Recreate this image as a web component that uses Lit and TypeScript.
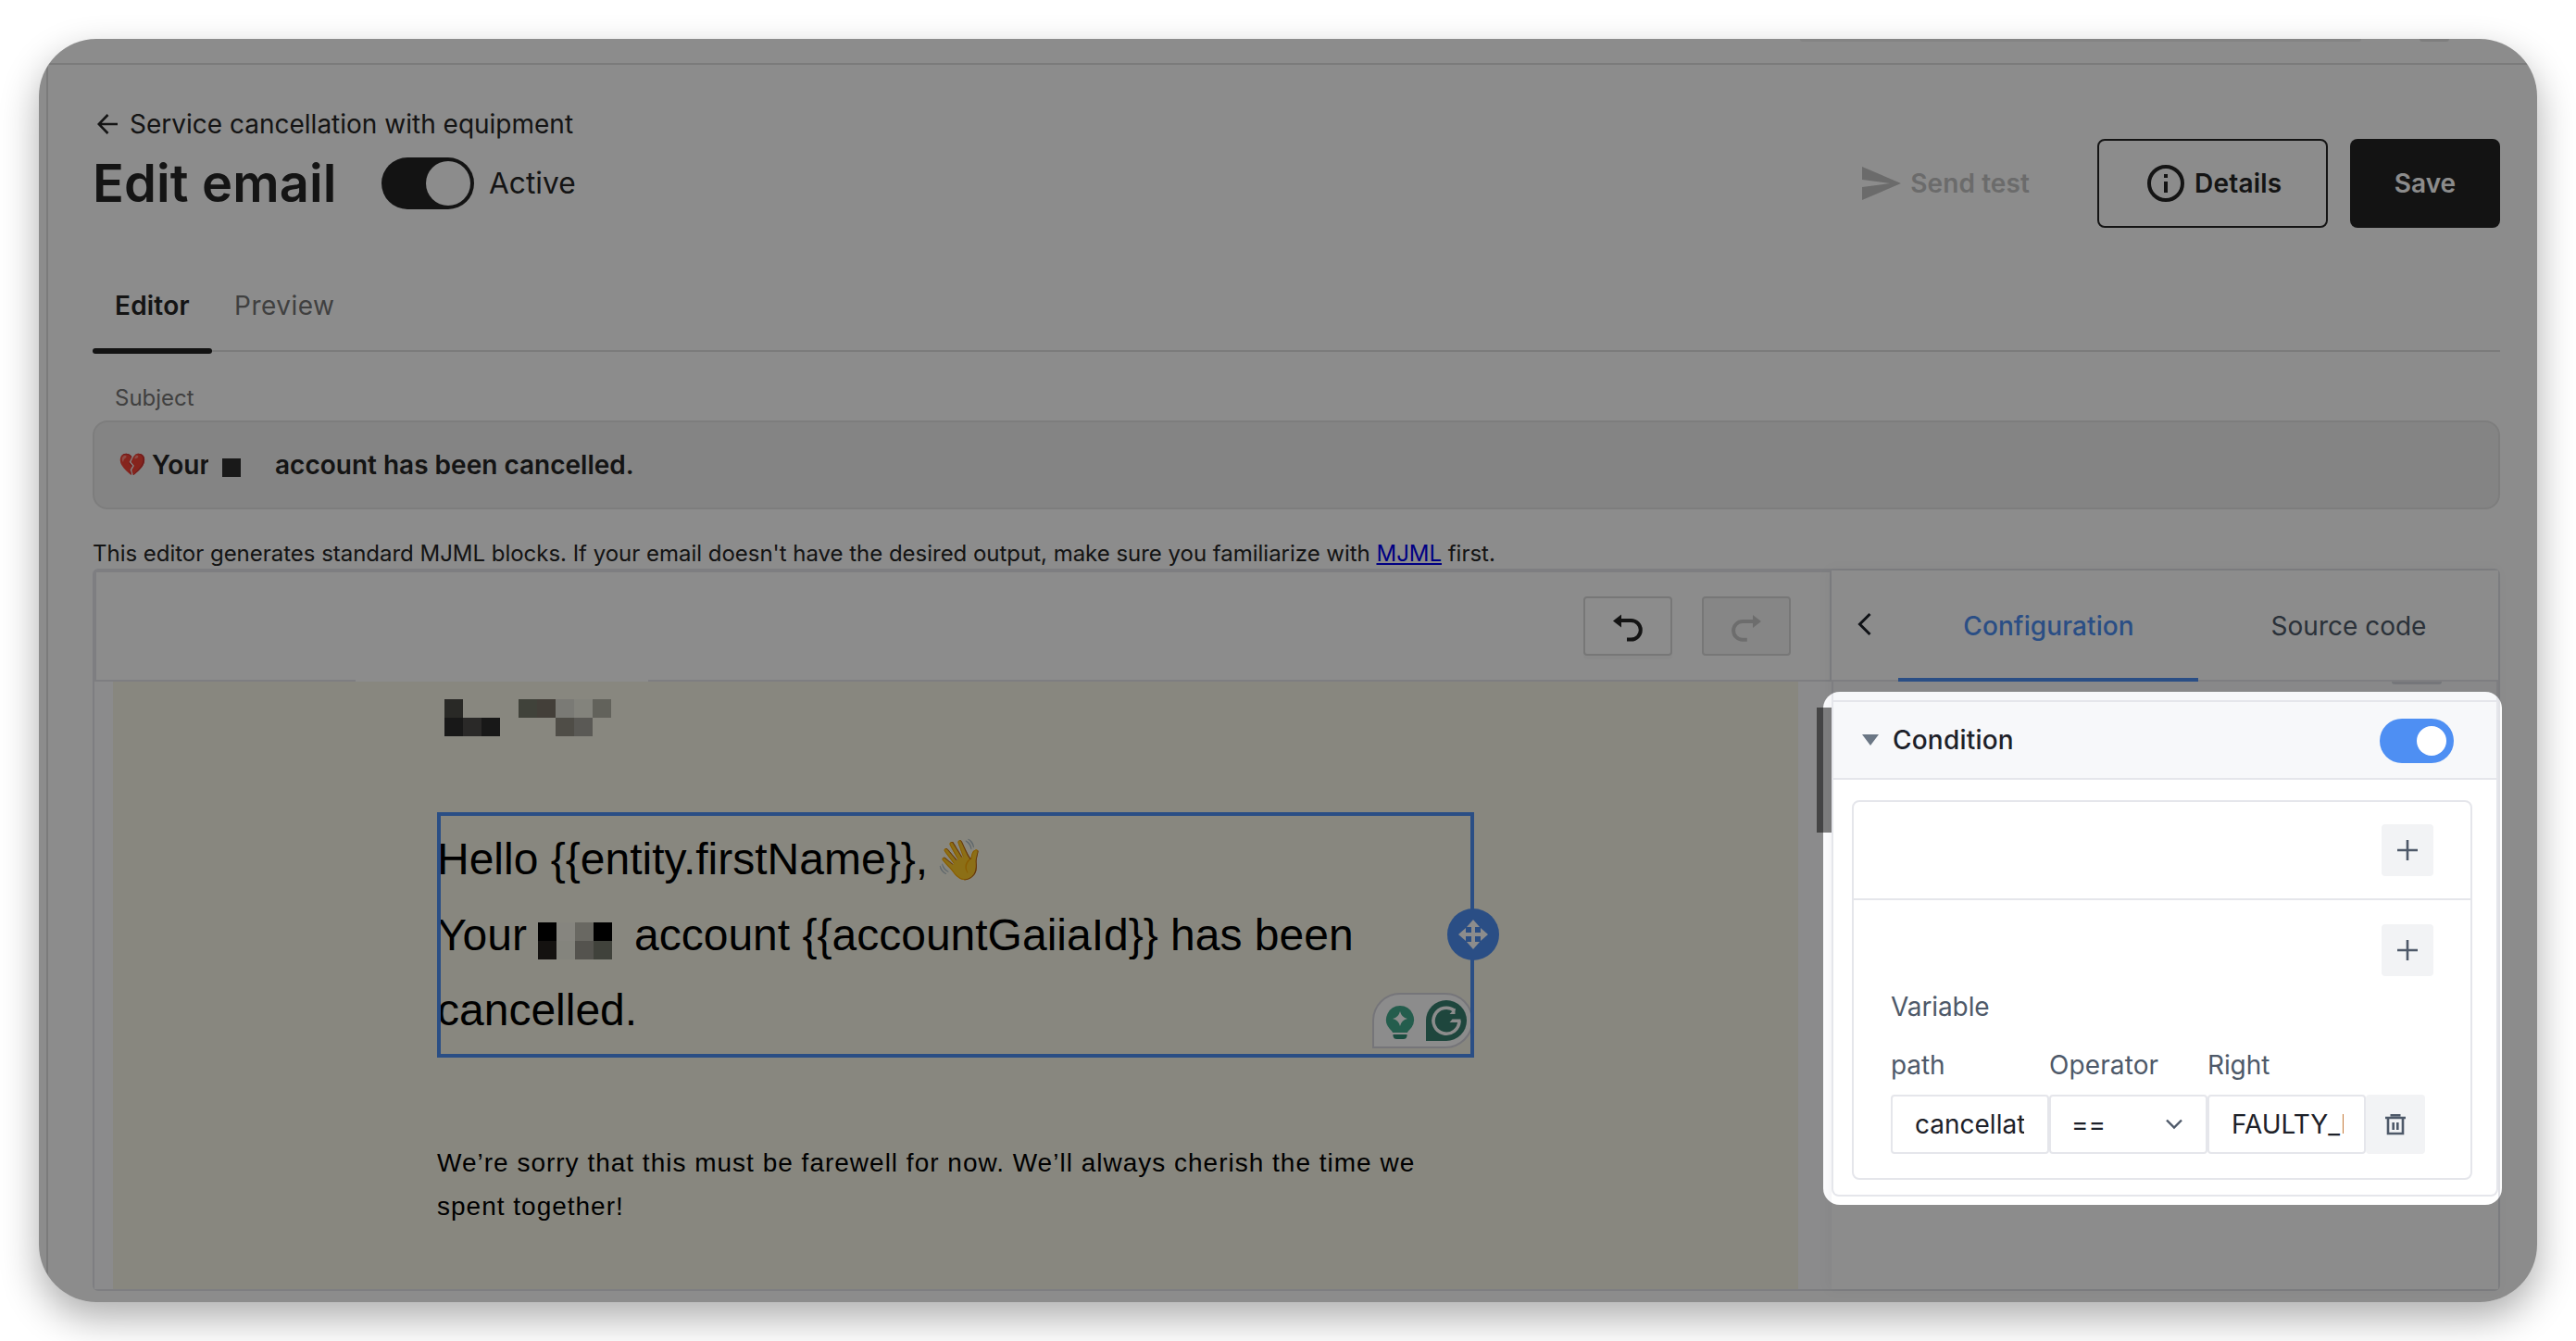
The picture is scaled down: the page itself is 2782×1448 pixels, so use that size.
import { LitElement, html, css, svg } from "lit";
import { customElement, state } from "lit/decorators.js";
import { styleMap } from "lit/directives/style-map.js";

const NONE = "transparent";

/* Pixelated redactions, one colour per 20px cell, row by row. */
const LOGO_CELLS = [
  ["#4b4b46", NONE, NONE, NONE, "#76796b", "#7a7468", "#deded5", "#efeee2", "#b2b2a7"],
  ["#2d2d2c", "#4d4c4a", "#2d2d2c", NONE, NONE, NONE, "#908d82", "#a4a39b", NONE],
];
const NAME_CELLS = [
  ["#000000", "#f4f3e8", "#bfbeb2", "#000000"],
  ["#25211e", "#f1f0e4", "#99988f", "#76796c"],
];

@customElement("pixel-mosaic")
class PixelMosaic extends LitElement {
  static properties = { cells: { attribute: false } };
  declare cells: string[][];

  static styles = css`
    :host {
      display: inline-flex;
      flex-direction: column;
    }
    .row {
      display: flex;
    }
    .cell {
      width: 20px;
      height: 20px;
    }
  `;

  render() {
    return (this.cells ?? []).map(
      (row) => html`<div class="row">
        ${row.map((c) => html`<div class="cell" style=${styleMap({ background: c })}></div>`)}
      </div>`,
    );
  }
}

@customElement("condition-panel")
class ConditionPanel extends LitElement {
  @state() private enabled = true;

  static styles = css`
    :host {
      display: block;
      color: #4e5969;
      font: 400 28px/1 Inter, sans-serif;
    }
    .card {
      border: solid #e5e6eb;
      border-width: 0 2px 2px;
      border-radius: 0 0 8px 8px;
      box-sizing: border-box;
      height: 556px;
      background: #fff;
      display: flex;
      flex-direction: column;
    }
    .prev {
      height: 20px;
      background: #f7f8fa;
      border-bottom: 2px solid #e5e6eb;
      display: flex;
      justify-content: flex-end;
      padding-right: 59px;
    }
    .prev-switch {
      width: 54px;
      height: 3px;
      border-radius: 0 0 24px 24px;
      background: #d5d8de;
    }
    .head {
      height: 82px;
      background: #f7f8fa;
      border-bottom: 2px solid #e5e6eb;
      display: flex;
      align-items: center;
      padding: 0 46px 0 31px;
    }
    .head svg {
      width: 18px;
      height: 12px;
      flex: none;
    }
    .title {
      margin-left: 15px;
      flex: 1;
      font-weight: 500;
      letter-spacing: 0.2px;
      color: #1d2129;
      line-height: 82px;
    }
    .switch {
      width: 80px;
      height: 48px;
      border: 0;
      padding: 8px;
      box-sizing: border-box;
      border-radius: 24px;
      background: #4e8ff3;
      display: flex;
      justify-content: flex-end;
      margin-top: 2px;
    }
    .knob {
      width: 32px;
      height: 32px;
      border-radius: 50%;
      background: #fff;
    }
    .group {
      margin: 22px 26px 0 20px;
      height: 410px;
      box-sizing: border-box;
      border: 2px solid #e5e6eb;
      border-radius: 8px;
    }
    .top {
      height: 104px;
      border-bottom: 2px solid #e5e6eb;
      display: flex;
      align-items: center;
      justify-content: flex-end;
      padding-right: 40px;
    }
    .rules {
      padding: 26px 40px 0;
      display: flex;
      flex-direction: column;
    }
    .add {
      width: 56px;
      height: 56px;
      border-radius: 4px;
      background: #f2f3f5;
      display: grid;
      place-items: center;
    }
    .rules .add {
      align-self: flex-end;
    }
    .add svg,
    .remove svg {
      width: 24px;
      height: 24px;
    }
    .labels {
      display: grid;
      grid-template-columns: 171px 171px 170px;
      grid-template-rows: 62px 64px;
      margin-top: 2px;
      line-height: 62px;
      letter-spacing: -0.1px;
    }
    .labels span:first-child {
      grid-column: 1 / -1;
    }
    .labels span:nth-child(n + 2) {
      line-height: 64px;
    }
    .labels span:nth-child(3) {
      letter-spacing: 0.1px;
    }
    .fields {
      display: flex;
      height: 64px;
    }
    .field {
      width: 171px;
      box-sizing: border-box;
      border: 2px solid #e5e6eb;
      border-radius: 4px;
      padding: 0 24px;
      line-height: 60px;
      color: #1d2129;
      display: flex;
      align-items: center;
      justify-content: space-between;
    }
    .field.path {
      padding-right: 25px;
    }
    .field.operator {
      padding-left: 22px;
      padding-right: 25px;
    }
    .field.right {
      padding-right: 22px;
    }
    .value {
      overflow: hidden;
      white-space: nowrap;
    }
    .field svg {
      width: 18px;
      height: 12px;
    }
    .remove {
      width: 64px;
      border-radius: 4px;
      background: #f2f3f5;
      display: grid;
      place-items: center;
    }
  `;

  private plus() {
    return html`<div class="add" role="button" aria-label="Add">
      <svg viewBox="0 0 24 24" fill="none" stroke="#4e5969" stroke-width="2.6">
        <path d="M12 1v22M1 12h22" />
      </svg>
    </div>`;
  }

  render() {
    return html`
      <div class="card">
        <div class="prev"><div class="prev-switch"></div></div>
        <div class="head">
          <svg viewBox="0 0 18 12"><path d="M0 0h18L9 12z" fill="#6b7785" /></svg>
          <span class="title">Condition</span>
          <div class="switch" role="switch" aria-checked=${String(this.enabled)}>
            <div class="knob"></div>
          </div>
        </div>
        <div class="group">
          <div class="top">${this.plus()}</div>
          <div class="rules">
            ${this.plus()}
            <div class="labels">
              <span>Variable</span><span>path</span><span>Operator</span><span>Right</span>
            </div>
            <div class="fields">
              <div class="field path"><span class="value">cancellat</span></div>
              <div class="field operator">
                <span class="value">==</span>
                <svg viewBox="0 0 18 12" fill="none" stroke="#4e5969" stroke-width="2.4">
                  <path d="M1 1.5l8 8 8-8" />
                </svg>
              </div>
              <div class="field right"><span class="value">FAULTY_I</span></div>
              <div class="remove" role="button" aria-label="Remove">
                <svg viewBox="0 0 24 24" fill="none" stroke="#4e5969" stroke-width="2.6">
                  <path d="M1 5h22M6.500 2.300h11M4 5v17h16V5M9.700 10v8M14.300 10v8" />
                </svg>
              </div>
            </div>
          </div>
        </div>
      </div>
    `;
  }
}

@customElement("app-root")
class AppRoot extends LitElement {
  static styles = css`
    :host {
      display: block;
      box-sizing: border-box;
      width: 2782px;
      height: 1448px;
      padding: 42px;
      overflow: hidden;
      background: #fff;
      color: #252525;
      font: 400 28px/1 Inter, sans-serif;
    }
    * {
      box-sizing: border-box;
    }
    .window {
      position: relative;
      height: 1364px;
      border-radius: 62px;
      overflow: hidden;
      background: #fff;
      box-shadow: 0 17px 42px rgba(0, 0, 0, 0.32);
    }
    .topbar {
      height: 28px;
      border-bottom: 2px solid #e1e1e1;
      display: flex;
      justify-content: flex-end;
      padding-right: 95px;
      gap: 63px;
    }
    .search-edge {
      width: 606px;
      height: 3px;
      border-radius: 0 0 6px 6px;
      background: #f0f0f0;
    }
    .avatar-edge {
      width: 32px;
      height: 3px;
      border-radius: 0 0 16px 16px;
      background: #e6e6e6;
    }
    .page {
      margin-left: 8px;
      height: 1336px;
      border-left: 2px solid #e1e1e1;
      padding: 44px 40px 0 48px;
    }
    .header {
      display: flex;
      justify-content: space-between;
      height: 132px;
    }
    .back {
      display: flex;
      align-items: center;
      height: 40px;
      padding-left: 5px;
    }
    .back svg {
      width: 23px;
      height: 24px;
      margin-right: 12px;
    }
    .title-row {
      display: flex;
      align-items: center;
      height: 88px;
    }
    h1 {
      margin: 0;
      font-size: 56px;
      font-weight: 600;
      line-height: 88px;
      letter-spacing: 0.12px;
      width: 312px;
      white-space: nowrap;
    }
    .switch {
      width: 100px;
      height: 56px;
      border-radius: 28px;
      background: #242424;
      padding: 4px;
      display: flex;
      justify-content: flex-end;
    }
    .knob {
      width: 48px;
      height: 48px;
      border-radius: 50%;
      background: #fff;
    }
    .active {
      margin-left: 16px;
      font-size: 31.7px;
    }
    .actions {
      display: flex;
      align-items: center;
      height: 96px;
      margin-top: 36px;
      font-weight: 600;
    }
    .send {
      display: flex;
      align-items: center;
      color: #c4c4c4;
      margin-right: 73px;
      letter-spacing: 0.1px;
    }
    .send svg {
      width: 42px;
      height: 36px;
      margin-right: 10px;
    }
    .details {
      width: 249px;
      height: 96px;
      border: 2px solid #252525;
      border-radius: 8px;
      display: flex;
      align-items: center;
      padding-left: 52px;
      letter-spacing: 0.2px;
    }
    .details svg {
      width: 40px;
      height: 40px;
      margin-right: 11px;
    }
    .save {
      width: 162px;
      height: 96px;
      margin-left: 24px;
      border-radius: 8px;
      background: #242424;
      color: #fff;
      display: grid;
      place-items: center;
    }
    .tabs {
      height: 134px;
      border-bottom: 2px solid #e1e1e1;
      display: flex;
      align-items: flex-end;
    }
    .tab {
      display: flex;
      flex-direction: column;
      margin-bottom: -4px;
      line-height: 92px;
    }
    .tab span {
      padding: 0 24px 0 24px;
    }
    .tab.on {
      width: 129px;
      font-weight: 600;
      letter-spacing: 0.2px;
    }
    .tab.off {
      color: #757575;
      letter-spacing: 0.5px;
    }
    .bar {
      height: 6px;
      border-radius: 3px;
    }
    .tab.on .bar {
      background: #242424;
    }
    .label {
      margin-top: 26px;
      padding-left: 24px;
      height: 48px;
      line-height: 48px;
      font-size: 24px;
      color: #757575;
    }
    .subject {
      height: 96px;
      border: 2px solid #e4e4e4;
      border-radius: 16px;
      background: #f0f0f0;
      display: flex;
      align-items: center;
      padding-left: 26px;
      font-weight: 600;
      white-space: pre;
    }
    .subject .heart {
      font-size: 24px;
      width: 36px;
      font-weight: 400;
      white-space: nowrap;
    }
    .subject .your {
      width: 61px;
      overflow: hidden;
      line-height: 40px;
    }
    .redacted {
      width: 20px;
      height: 20px;
      margin: 6px 37px 0 15px;
      background: #2e2e2e;
    }
    .note {
      margin-top: 31px;
      height: 33px;
      line-height: 33px;
      font-size: 24px;
      letter-spacing: -0.022px;
      white-space: nowrap;
    }
    .note a {
      color: #0000ee;
    }
    .editor {
      height: 780px;
      border: 2px solid #e5e6eb;
      border-radius: 6px;
      display: flex;
      background: #fff;
    }
    .left {
      width: 1876px;
      display: flex;
      flex-direction: column;
    }
    .toolbar {
      height: 120px;
      border: 2px solid #e5e6eb;
      display: flex;
      align-items: flex-start;
      justify-content: flex-end;
      padding: 26px 42px 0 0;
      gap: 32px;
    }
    .tool {
      width: 96px;
      height: 64px;
      border: 2px solid #d9d9d9;
      border-radius: 4px;
      box-shadow: 0 4px 0 rgba(0, 0, 0, 0.02);
    }
    .tool.off {
      background: #f5f5f5;
      box-shadow: none;
    }
    .tool svg {
      display: block;
      width: 92px;
      height: 60px;
    }
    .stage {
      position: relative;
      height: 656px;
      padding: 0 36px 0 20px;
      background: #fdfdff;
    }
    .cut {
      position: absolute;
      left: 282px;
      top: -2px;
      width: 316px;
      height: 2px;
      background: #fff;
    }
    .thumb {
      position: absolute;
      right: 0;
      top: 28px;
      width: 16px;
      height: 135px;
      background: rgba(0, 0, 0, 0.5);
    }
    .canvas {
      height: 656px;
      background: #f7f6e8;
      padding: 19px 350px 0;
      color: #000;
      font-family: "Liberation Sans", Arial, sans-serif;
    }
    .logo {
      display: flex;
      margin-left: 8px;
    }
    .block {
      position: relative;
      width: 1120px;
      height: 265px;
      margin-top: 82px;
      padding-top: 10px;
      font-size: 48px;
      line-height: 81.6px;
      white-space: nowrap;
    }
    .line {
      height: 81.6px;
    }
    .frame {
      position: absolute;
      inset: 0;
      border: 4px solid #4e8ff3;
    }
    .wave {
      font-size: 43px;
      line-height: 1px;
      margin-left: -5px;
      vertical-align: 1px;
    }
    .name {
      vertical-align: 10px;
      margin: 0 24px 0 12px;
      line-height: 0;
    }
    .move {
      position: absolute;
      left: 1091px;
      top: 104px;
      width: 56px;
      height: 56px;
    }
    .helper {
      position: absolute;
      right: 1px;
      bottom: 10px;
      width: 109px;
      height: 60px;
      border: 2px solid #d6d5dd;
      border-radius: 30px 30px 30px 0;
      background: #fff;
      display: flex;
      align-items: center;
      padding-left: 12px;
      gap: 12px;
    }
    .helper .bulb {
      width: 32px;
      height: 40px;
      margin-top: 5px;
    }
    .helper .g {
      width: 44px;
      height: 44px;
      margin-right: -8px;
      flex: none;
    }
    .copy {
      width: 1120px;
      margin: 90px 0 0;
      font-size: 28px;
      line-height: 47px;
      letter-spacing: 1px;
    }
    .right {
      flex: 1;
      position: relative;
      background: #fff;
      box-shadow: -2px 0 14px rgba(0, 0, 0, 0.05);
    }
    .panel-head {
      height: 120px;
      border-bottom: 2px solid #e5e6eb;
      display: flex;
      align-items: flex-end;
      padding-left: 28px;
    }
    .panel-head svg {
      width: 15px;
      height: 26px;
      margin: 0 29px 47px 0;
    }
    .ptab {
      width: 324px;
      height: 120px;
      line-height: 120px;
      text-align: center;
      margin-bottom: -2px;
      color: #4e5969;
    }
    .ptab.on {
      border-bottom: 4px solid #4e8ff3;
      color: #4e8ff3;
      font-weight: 500;
      letter-spacing: 0.1px;
      padding-left: 1px;
    }
    .ptab.off {
      padding-left: 1px;
    }
    .spotlight {
      position: absolute;
      left: 1927px;
      top: 705px;
      width: 733px;
      height: 554px;
      border-radius: 18px;
      box-shadow: 0 0 0 3000px rgba(0, 0, 0, 0.45);
      pointer-events: none;
    }
  `;

  private moveHandle() {
    const head = svg`<path d="M0-16l7 8h-14z" />`;
    return html`<svg class="move" viewBox="-28 -28 56 56">
      <circle r="28" fill="#4e8ff3" />
      <g fill="#fff">
        <path d="M-2-10h4v8h8v4h-8v8h-4v-8h-8v-4h8z" />
        ${[0, 90, 180, 270].map((a) => svg`<g transform="rotate(${a})">${head}</g>`)}
      </g>
    </svg>`;
  }

  private helper() {
    return html`<div class="helper">
      <svg class="bulb" viewBox="0 0 32 40">
        <path d="M16 1a15 15 0 0 1 11.500 24.600c-2 2-3 3.400-3.500 4.400H8c-.5-1-1.500-2.400-3.500-4.400A15 15 0 0 1 16 1z" fill="#43a98d" />
        <path d="M8.500 32h15v1.500q-.5 3.500-4 3.500h-7q-3.500 0-4-3.500z" fill="#2f8a73" />
        <path d="M16 7q1.500 6.500 8 8-6.500 1.500-8 8-1.500-6.500-8-8 6.500-1.500 8-8z" fill="#fff" />
      </svg>
      <svg class="g" viewBox="0 0 44 44">
        <path d="M22 0a22 22 0 0 1 0 44H0V22A22 22 0 0 1 22 0z" fill="#37806f" />
        <path d="M31 11.500A14 14 0 1 0 36 22.500" fill="none" stroke="#fff" stroke-width="3.600" />
        <path d="M37.500 20.500v3.600h-12l3-3.600z" fill="#fff" />
        <path d="M31.500 8.500v6.500h-6z" fill="#fff" />
      </svg>
    </div>`;
  }

  render() {
    return html`
      <div class="window">
        <div class="topbar">
          <div class="search-edge"></div>
          <div class="avatar-edge"></div>
        </div>
        <div class="page">
          <div class="header">
            <div>
              <div class="back">
                <svg viewBox="0 0 23 24" fill="none" stroke="#252525" stroke-width="2.600">
                  <path d="M22 12H2M11.500 2L1.700 12l9.800 10" />
                </svg>
                <span>Service cancellation with equipment</span>
              </div>
              <div class="title-row">
                <h1>Edit email</h1>
                <div class="switch"><div class="knob"></div></div>
                <span class="active">Active</span>
              </div>
            </div>
            <div class="actions">
              <div class="send">
                <svg viewBox="0 0 42 36">
                  <path d="M0 0l42 18L0 36V22l30-4L0 14z" fill="#c4c4c4" />
                </svg>
                <span>Send test</span>
              </div>
              <div class="details">
                <svg viewBox="-20 -20 40 40">
                  <circle r="18" fill="none" stroke="#252525" stroke-width="4" />
                  <path d="M-2-10h4v4h-4zM-2-2h4v12h-4z" fill="#252525" />
                </svg>
                <span>Details</span>
              </div>
              <div class="save">Save</div>
            </div>
          </div>
          <div class="tabs">
            <div class="tab on"><span>Editor</span><div class="bar"></div></div>
            <div class="tab off"><span>Preview</span><div class="bar"></div></div>
          </div>
          <div class="label">Subject</div>
          <div class="subject"><span class="heart">💔</span><span class="your">Your</span><span class="redacted"></span><span>account has been cancelled.</span></div>
          <div class="note">
            This editor generates standard MJML blocks. If your email doesn't have the desired
            output, make sure you familiarize with <a href="#">MJML</a> first.
          </div>
          <div class="editor">
            <div class="left">
              <div class="toolbar">
                <div class="tool">
                  <svg viewBox="2 2 92 60">
                    <path d="M32 26.500l9-7v14z" fill="#252525" />
                    <path d="M40 26h11.500a10.300 10.300 0 0 1 0 20.600H47" fill="none" stroke="#252525" stroke-width="4" />
                  </svg>
                </div>
                <div class="tool off">
                  <svg viewBox="2 2 92 60">
                    <path d="M64 27l-9-7v14z" fill="#c6c6c6" />
                    <path d="M56 27H44a9.900 9.900 0 0 0 0 19.800h4.800" fill="none" stroke="#c6c6c6" stroke-width="4" />
                  </svg>
                </div>
              </div>
              <div class="stage">
                <div class="cut"></div>
                <div class="canvas">
                  <div class="logo"><pixel-mosaic .cells=${LOGO_CELLS}></pixel-mosaic></div>
                  <div class="block">
                    <div class="line">Hello {{entity.firstName}}, <span class="wave">👋</span></div>
                    <div class="line">Your<pixel-mosaic class="name" .cells=${NAME_CELLS}></pixel-mosaic>account {{accountGaiiaId}} has been</div>
                    <div class="line">cancelled.</div>
                    ${this.helper()}
                    <div class="frame"></div>
                    ${this.moveHandle()}
                  </div>
                  <p class="copy">
                    We’re sorry that this must be farewell for now. We’ll always cherish the time we
                    spent together!
                  </p>
                </div>
                <div class="thumb"></div>
              </div>
            </div>
            <div class="right">
              <div class="panel-head">
                <svg viewBox="0 0 15 26" fill="none" stroke="#1d2129" stroke-width="3">
                  <path d="M13.500 2L2.500 13l11 11" />
                </svg>
                <div class="ptab on">Configuration</div>
                <div class="ptab off">Source code</div>
              </div>
              <condition-panel></condition-panel>
            </div>
          </div>
        </div>
        <div class="spotlight"></div>
      </div>
    `;
  }
}
